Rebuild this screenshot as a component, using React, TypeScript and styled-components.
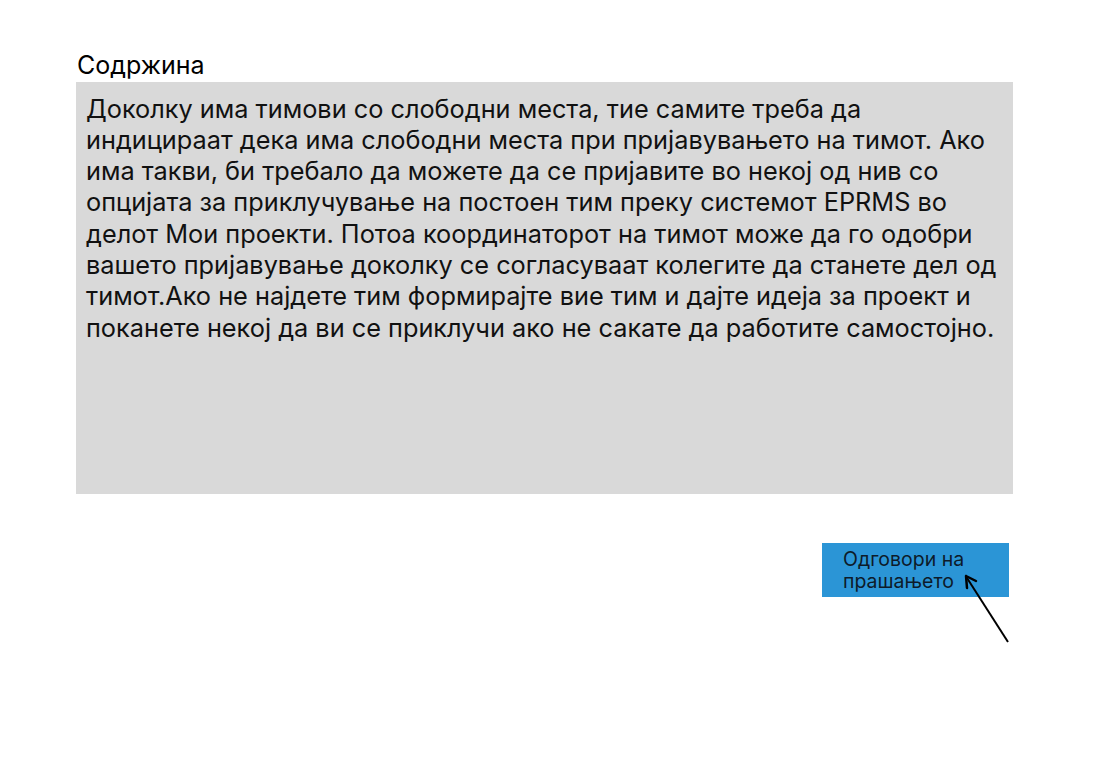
import React from "react";
import styled, { createGlobalStyle } from "styled-components";

const Global = createGlobalStyle`
  html, body { margin: 0; padding: 0; background: #ffffff; }
  body { font-family: Inter, "Noto Sans", sans-serif; color: #000; }
`;

const Page = styled.div`
  width: 1116px;
  height: 782px;
  padding: 50px 0 0 77px;
  box-sizing: border-box;
  display: flex;
  flex-direction: column;
`;

const Label = styled.div`
  font-size: 25px;
  line-height: 30px;
  height: 32px;
`;

const ContentBox = styled.div`
  width: 937px;
  height: 412px;
  margin-left: -1px;
  background: #d9d9d9;
  box-sizing: border-box;
  padding: 10.5px 8px 0 10px;
  font-size: 25.3px;
  line-height: 31.3px;
  color: #111;
`;

const Line = styled.span`
  display: block;
  white-space: nowrap;
`;

const Actions = styled.div`
  display: flex;
  justify-content: flex-end;
  width: 932px;
  margin-top: 49px;
  position: relative;
`;

const AnswerButton = styled.div`
  width: 187px;
  height: 54px;
  background: #2b95d6;
  box-sizing: border-box;
  padding: 5px 0 0 21px;
  font-size: 19.5px;
  line-height: 22px;
  color: #0d1b2a;
`;

const Arrow = styled.svg`
  position: absolute;
  left: 880px;
  top: 24px;
  overflow: visible;
`;

const lines = [
  "Доколку има тимови со слободни места, тие самите треба да",
  "индицираат дека има слободни места при пријавувањето на тимот. Ако",
  "има такви, би требало да можете да се пријавите во некој од нив со",
  "опцијата за приклучување на постоен тим преку системот EPRMS во",
  "делот Мои проекти. Потоа координаторот на тимот може да го одобри",
  "вашето пријавување доколку се согласуваат колегите да станете дел од",
  "тимот.Ако не најдете тим формирајте вие тим и дајте идеја за проект и",
  "поканете некој да ви се приклучи ако не сакате да работите самостојно.",
];

export default function App() {
  return (
    <>
      <Global />
      <Page>
        <Label>Содржина</Label>
        <ContentBox>
          {lines.map((l, i) => (
            <Line key={i}>{l}</Line>
          ))}
        </ContentBox>
        <Actions>
          <AnswerButton>
            Одговори на
            <br />
            прашањето
          </AnswerButton>
          <Arrow width="60" height="80" viewBox="0 0 60 80">
            <line x1="51" y1="75" x2="10" y2="11" stroke="#000" strokeWidth="2" />
            <path d="M9 9 L10 21 M9 9 L19 14" stroke="#000" strokeWidth="2.5" fill="none" strokeLinecap="round" />
          </Arrow>
        </Actions>
      </Page>
    </>
  );
}
